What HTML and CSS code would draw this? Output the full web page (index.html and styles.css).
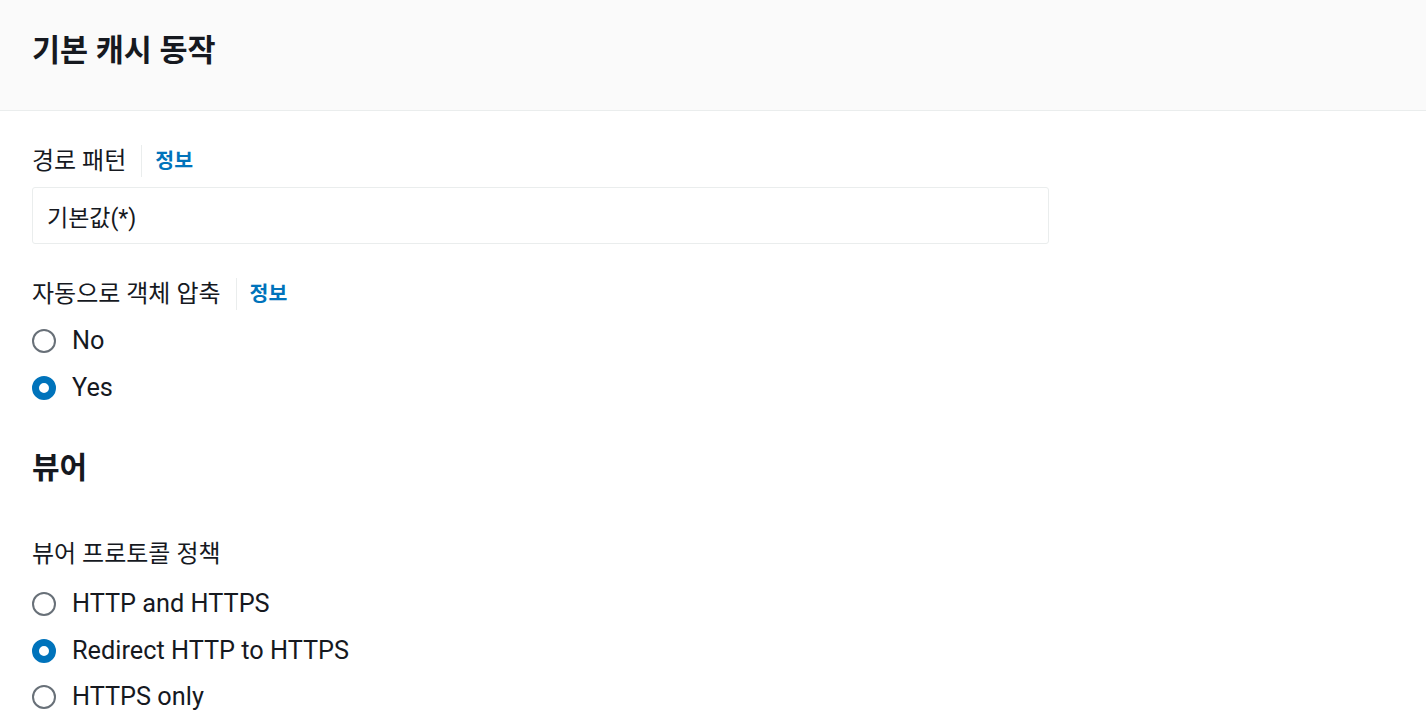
FILE: index.html
```html
<!DOCTYPE html>
<html lang="ko">
<head>
<meta charset="utf-8">
<title>기본 캐시 동작</title>
<link rel="stylesheet" href="styles.css">
</head>
<body>
<div class="panel">
  <div class="panel-header">
    <h2 class="panel-title">기본 캐시 동작</h2>
  </div>
  <div class="panel-body">
    <div class="field field-first">
      <div class="label-row">
        <span class="label">경로 패턴</span>
        <span class="divider"></span>
        <a class="info" href="#">정보</a>
      </div>
      <div class="input">기본값(*)</div>
    </div>

    <div class="field field-compress">
      <div class="label-row">
        <span class="label">자동으로 객체 압축</span>
        <span class="divider"></span>
        <a class="info" href="#">정보</a>
      </div>
      <div class="radio-group">
        <label class="radio"><span class="dot"></span><span class="radio-text">No</span></label>
        <label class="radio"><span class="dot checked"></span><span class="radio-text">Yes</span></label>
      </div>
    </div>

    <h2 class="section-title">뷰어</h2>

    <div class="field field-viewer">
      <div class="label-row">
        <span class="label">뷰어 프로토콜 정책</span>
      </div>
      <div class="radio-group radio-group-viewer">
        <label class="radio"><span class="dot"></span><span class="radio-text">HTTP and HTTPS</span></label>
        <label class="radio"><span class="dot checked"></span><span class="radio-text">Redirect HTTP to HTTPS</span></label>
        <label class="radio"><span class="dot"></span><span class="radio-text">HTTPS only</span></label>
      </div>
    </div>
  </div>
</div>
</body>
</html>
```

FILE: styles.css
```css
* { box-sizing: border-box; }
html, body {
  margin: 0;
  padding: 0;
  background: #ffffff;
  color: #16191f;
  font-family: Roboto, "Noto Sans CJK KR", sans-serif;
}
.panel-header {
  height: 111px;
  background: #fafafa;
  border-bottom: 1px solid #eaeded;
  display: flex;
  align-items: center;
  padding: 0 32px 8px;
}
.panel-title {
  margin: 0;
  font-size: 30.5px;
  font-weight: 700;
  line-height: 40px;
}
.panel-body {
  padding: 0 32px;
  display: flex;
  flex-direction: column;
}
.field-first { margin-top: 34px; }
.field-compress { margin-top: 34px; }
.label-row {
  display: flex;
  align-items: center;
  height: 32px;
}
.label {
  font-size: 24px;
  line-height: 32px;
}
.divider {
  width: 1px;
  height: 32px;
  background: #eaeded;
  margin: 0 13px 0 15px;
}
.info {
  color: #0073bb;
  font-weight: 700;
  font-size: 20.5px;
  text-decoration: none;
  line-height: 32px;
}
.input {
  margin-top: 10px;
  width: 1017px;
  height: 57px;
  border: 1px solid #eaeded;
  border-radius: 3px;
  padding: 0 14px;
  display: flex;
  align-items: center;
  font-size: 23px;
}
.radio-group {
  display: flex;
  flex-direction: column;
  margin-top: 7px;
}
.radio-group-viewer { margin-top: 11px; }
.radio {
  display: flex;
  align-items: center;
  height: 47px;
}
.radio-group-viewer .radio { height: 46.5px; }
.dot {
  width: 24px;
  height: 24px;
  border-radius: 50%;
  border: 2px solid #687078;
  background: #fff;
  flex: none;
}
.dot.checked {
  border: 7.5px solid #0073bb;
}
.radio-text {
  margin-left: 16px;
  font-size: 25.3px;
  line-height: 32px;
}
.section-title {
  margin: 37px 0 0;
  font-size: 30px;
  font-weight: 700;
  line-height: 40px;
}
.field-viewer { margin-top: 50px; }
```
